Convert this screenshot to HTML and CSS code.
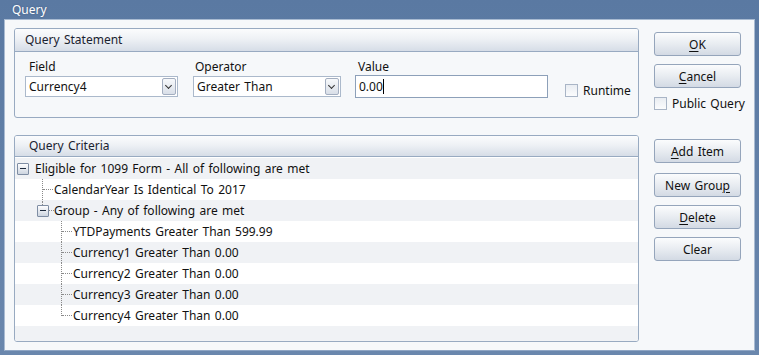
FILE: index.html
```html
<!DOCTYPE html>
<html lang="en">
<head>
    <meta charset="UTF-8">
    <title>Query</title>
    <link rel="stylesheet" href="styles.css">
</head>
<body>
    <div class="window">
        <div class="titlebar">Query</div>
        <div class="client">
            <div class="main">
                <div class="panel statement">
                    <div class="panel-head">Query Statement</div>
                    <div class="fields">
                        <div class="field f-field">
                            <label>Field</label>
                            <div class="combo"><span>Currency4</span><span class="drop"></span></div>
                        </div>
                        <div class="field f-op">
                            <label>Operator</label>
                            <div class="combo"><span>Greater Than</span><span class="drop"></span></div>
                        </div>
                        <div class="field f-value">
                            <label>Value</label>
                            <div class="textbox">0.00<span class="caret"></span></div>
                        </div>
                        <div class="check runtime"><span class="box"></span>Runtime</div>
                    </div>
                </div>

                <div class="panel criteria">
                    <div class="panel-head">Query Criteria</div>
                    <div class="tree">
                        <div class="row alt lvl0"><span class="toggle"></span>Eligible for 1099 Form - All of following are met</div>
                        <div class="row lvl1"><span class="branch tee"></span>CalendarYear Is Identical To 2017</div>
                        <div class="row alt lvl1g"><span class="toggle up"></span><span class="stub"></span>Group - Any of following are met</div>
                        <div class="row lvl2"><span class="branch tee"></span>YTDPayments Greater Than 599.99</div>
                        <div class="row alt lvl2"><span class="branch tee"></span>Currency1 Greater Than 0.00</div>
                        <div class="row lvl2"><span class="branch tee"></span>Currency2 Greater Than 0.00</div>
                        <div class="row alt lvl2"><span class="branch tee"></span>Currency3 Greater Than 0.00</div>
                        <div class="row lvl2"><span class="branch elbow"></span>Currency4 Greater Than 0.00</div>
                        <div class="row alt"></div>
                    </div>
                </div>
            </div>

            <div class="side">
                <button class="btn btn-ok"><u>O</u>K</button>
                <button class="btn"><u>C</u>ancel</button>
                <div class="check public"><span class="box"></span>Public Query</div>
                <button class="btn btn-add"><u>A</u>dd Item</button>
                <button class="btn">New Grou<u>p</u></button>
                <button class="btn"><u>D</u>elete</button>
                <button class="btn">Clear</button>
            </div>
        </div>
    </div>
</body>
</html>
```

FILE: styles.css
```css
body {
    margin: 0;
    font-family: 'Noto Sans', 'Open Sans', sans-serif;
    font-size: 12px;
    word-spacing: 1.2px;
    color: #111;
}

.window {
    width: 759px;
    height: 355px;
    box-sizing: border-box;
    display: flex;
    flex-direction: column;
    background: linear-gradient(#5a79a2, #6a87ad);
    padding: 0 4px 5px 4px;
}

.titlebar {
    height: 19px;
    line-height: 19px;
    padding-left: 8px;
    color: #fff;
    text-shadow: 0 0 2px #3e5a80;
    flex: none;
}

.client {
    flex: 1;
    display: flex;
    background: #f6f8fa;
    border: 1px solid #a9bbd2;
    border-bottom-color: #8ea5c4;
    padding: 8px 0 8px 9px;
}

.main {
    width: 625px;
    flex: none;
    display: flex;
    flex-direction: column;
}

.panel {
    border: 1px solid #98aac1;
    border-radius: 3px;
    background: #f6f8fa;
    overflow: hidden;
}

.panel-head {
    height: 22px;
    line-height: 22px;
    padding-left: 10px;
    background: linear-gradient(#fbfcfd, #eef1f5 45%, #d6dde7);
    border-bottom: 1px solid #98aac1;
    color: #1a2230;
}

.statement {
    height: 88px;
}

.fields {
    display: flex;
    align-items: flex-start;
    padding: 5px 0 0 10px;
}

.field label {
    display: block;
    height: 19px;
    line-height: 19px;
    padding-left: 4px;
}

.f-field { width: 168px; }
.f-op { width: 162px; }
.f-op label { padding-left: 2px; }
.f-value { width: 209px; }
.f-value label { padding-left: 3px; }

.combo, .textbox {
    height: 21px;
    box-sizing: border-box;
    border: 1px solid #abb9cb;
    background: #fff;
    display: flex;
    align-items: center;
    padding-left: 3px;
}

.f-field .combo { width: 153px; }
.f-op .combo { width: 148px; }

.combo span:first-child {
    flex: 1;
}

.drop {
    width: 14px;
    height: 17px;
    margin-right: 1px;
    box-sizing: border-box;
    border: 1px solid #a3aec0;
    border-radius: 2px;
    background: linear-gradient(#f7f9fb, #d9dfe8);
    position: relative;
}

.drop::after {
    content: "";
    position: absolute;
    left: 3px;
    top: 4px;
    width: 4px;
    height: 4px;
    border-right: 1px solid #333;
    border-bottom: 1px solid #333;
    transform: rotate(45deg);
}

.textbox {
    width: 193px;
    border-color: #8da0b9;
    height: 23px;
    margin-top: -1px;
}

.caret {
    display: inline-block;
    width: 1px;
    height: 15px;
    background: #000;
}

.check {
    display: flex;
    align-items: center;
    height: 19px;
    white-space: nowrap;
}

.box {
    width: 13px;
    height: 13px;
    flex: none;
    box-sizing: border-box;
    border: 1px solid #a9b5c6;
    background: linear-gradient(#e9edf2, #fbfcfd);
    margin-right: 5px;
}

.runtime {
    margin-top: 24px;
    margin-left: 1px;
}

.criteria {
    margin-top: 17px;
    height: 205px;
    background: #fff;
}

.criteria .panel-head {
    height: 20px;
    line-height: 20px;
    padding-left: 14px;
}

.tree {
    padding-top: 1px;
}

.row {
    height: 21px;
    line-height: 21px;
    display: flex;
    align-items: center;
    background: #fff;
    white-space: nowrap;
}

.row.alt {
    background: #f0f2f5;
}

.lvl0 { padding-left: 2px; }
.lvl1 { padding-left: 27px; }
.lvl1g { padding-left: 22px; }
.lvl2 { padding-left: 46px; }

.toggle {
    width: 12px;
    height: 12px;
    box-sizing: border-box;
    border: 1px solid #7e8da3;
    border-radius: 1px;
    background: linear-gradient(#fdfdfe, #cdd5e0);
    margin-right: 6px;
    position: relative;
}

.toggle::before {
    content: "";
    position: absolute;
    left: 2px;
    top: 4px;
    width: 6px;
    height: 1px;
    background: #1d2a3c;
}

.toggle.up {
    margin-right: 0;
}

.toggle.up::after {
    content: "";
    position: absolute;
    left: 4px;
    top: -5px;
    height: 4px;
    border-left: 1px dotted #8a8a8a;
}

.stub {
    width: 5px;
    height: 1px;
    border-top: 1px dotted #8a8a8a;
}

.branch {
    width: 12px;
    align-self: stretch;
    position: relative;
    flex: none;
}

.branch::before {
    content: "";
    position: absolute;
    left: 0;
    top: 0;
    bottom: 0;
    border-left: 1px dotted #8a8a8a;
}

.branch.elbow::before {
    bottom: 10px;
}

.branch::after {
    content: "";
    position: absolute;
    left: 1px;
    top: 10px;
    width: 10px;
    border-top: 1px dotted #8a8a8a;
}

.side {
    flex: 1;
    display: flex;
    flex-direction: column;
    align-items: flex-start;
    padding-left: 15px;
}

.btn {
    width: 87px;
    height: 24px;
    margin: 0 0 8px 0;
    padding: 0;
    font: inherit;
    word-spacing: inherit;
    color: #111;
    border: 1px solid #95a5bb;
    border-radius: 3px;
    background: linear-gradient(#fbfcfd, #e8ecf1 50%, #d3dae4);
    cursor: pointer;
}

.btn u {
    text-decoration-thickness: 1px;
    text-underline-offset: 2px;
}

.btn-ok {
    margin-top: 4px;
}

.public {
    margin: -2px 0 0 0;
}

.btn-add {
    margin-top: 26px;
    margin-bottom: 10px;
}
```
